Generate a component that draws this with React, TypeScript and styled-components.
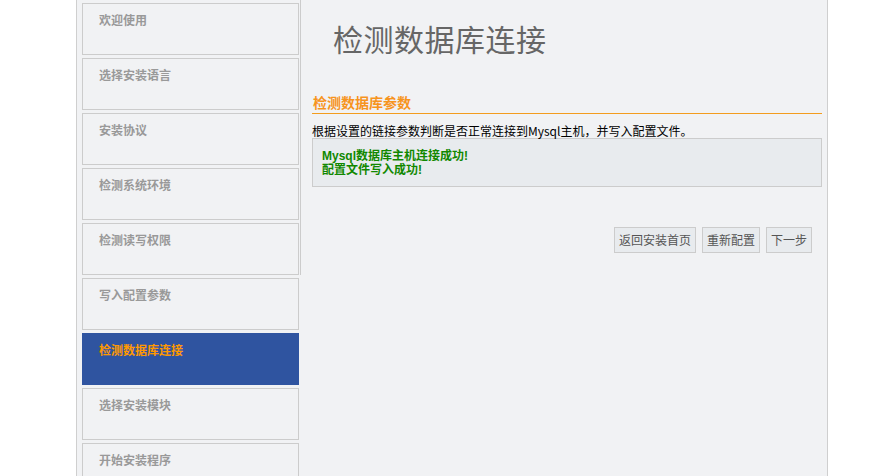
import React from "react";
import styled, {createGlobalStyle} from "styled-components";

const GlobalStyle = createGlobalStyle`
  html, body {
    margin: 0;
    padding: 0;
    background: #ffffff;
    font-family: "Noto Sans CJK SC", "Noto Sans", sans-serif;
    font-size: 12px;
  }
`

const steps = [
    "欢迎使用",
    "选择安装语言",
    "安装协议",
    "检测系统环境",
    "检测读写权限",
    "写入配置参数",
    "检测数据库连接",
    "选择安装模块",
    "开始安装程序",
];

const activeStep = 6;

export default function App() {
    return (
        <>
            <GlobalStyle/>
            <Wrapper>
                <SideBar>
                    {steps.map((step, i) => (
                        <StepItem key={step} $active={i === activeStep}>{step}</StepItem>
                    ))}
                </SideBar>
                <Main>
                    <Title>检测数据库连接</Title>
                    <SectionHead>检测数据库参数</SectionHead>
                    <Desc>根据设置的链接参数判断是否正常连接到Mysql主机，并写入配置文件。</Desc>
                    <ResultBox>
                        <ResultLine>Mysql数据库主机连接成功!</ResultLine>
                        <ResultLine>配置文件写入成功!</ResultLine>
                    </ResultBox>
                    <ButtonRow>
                        <Button type="button">返回安装首页</Button>
                        <Button type="button">重新配置</Button>
                        <Button type="button">下一步</Button>
                    </ButtonRow>
                </Main>
            </Wrapper>
        </>
    );
}

const Wrapper = styled.div`
  display: flex;
  align-items: flex-start;
  width: 750px;
  margin-left: 76px;
  min-height: 520px;
  background: #f1f2f4;
  border-left: 1px solid #cfcfcf;
  border-right: 1px solid #cfcfcf;
`

const SideBar = styled.div`
  display: flex;
  flex-direction: column;
  gap: 3px;
  width: 217px;
  padding: 3px 0 0 5px;
  margin-right: 1px;
`

const StepItem = styled.div<{ $active?: boolean }>`
  height: 52px;
  box-sizing: border-box;
  border: 1px solid ${p => p.$active ? "#2f54a0" : "#cccccc"};
  background: ${p => p.$active ? "#2f54a0" : "#f1f2f4"};
  color: ${p => p.$active ? "#ff9900" : "#999999"};
  font-weight: bold;
  font-size: 12px;
  line-height: 16px;
  padding: 8px 0 0 16px;
`

const Main = styled.div`
  flex: 1;
  height: 275px;
  border-left: 1px solid #cccccc;
  padding: 0 5px 0 11px;
`

const Title = styled.h1`
  margin: 0;
  padding: 18px 0 0 21px;
  height: 40px;
  line-height: 40px;
  font-size: 30px;
  font-weight: normal;
  color: #666666;
  letter-spacing: 0.5px;
`

const SectionHead = styled.h2`
  margin: 34px 0 0;
  padding: 0 0 1px 1px;
  line-height: 20px;
  font-size: 14px;
  font-weight: bold;
  color: #f7941d;
  border-bottom: 1px solid #f39c1e;
`

const Desc = styled.p`
  margin: 9px 0 0;
  line-height: 15px;
  font-size: 12px;
  color: #000000;
`

const ResultBox = styled.div`
  background: #e8ebee;
  border: 1px solid #cccccc;
  padding: 10px 9px 9px;
`

const ResultLine = styled.div`
  line-height: 14px;
  font-family: "Liberation Sans", "Noto Sans CJK SC", sans-serif;
  font-size: 12px;
  font-weight: bold;
  color: #118800;
`

const ButtonRow = styled.div`
  display: flex;
  justify-content: flex-end;
  gap: 6px;
  margin-top: 40px;
  padding-right: 10px;
`

const Button = styled.button`
  height: 26px;
  padding: 0 4px;
  border: 1px solid #cccccc;
  background: #e8ebee;
  color: #555555;
  font-family: "Noto Sans CJK SC", "Noto Sans", sans-serif;
  font-size: 12px;
  line-height: 24px;
  cursor: pointer;
`
